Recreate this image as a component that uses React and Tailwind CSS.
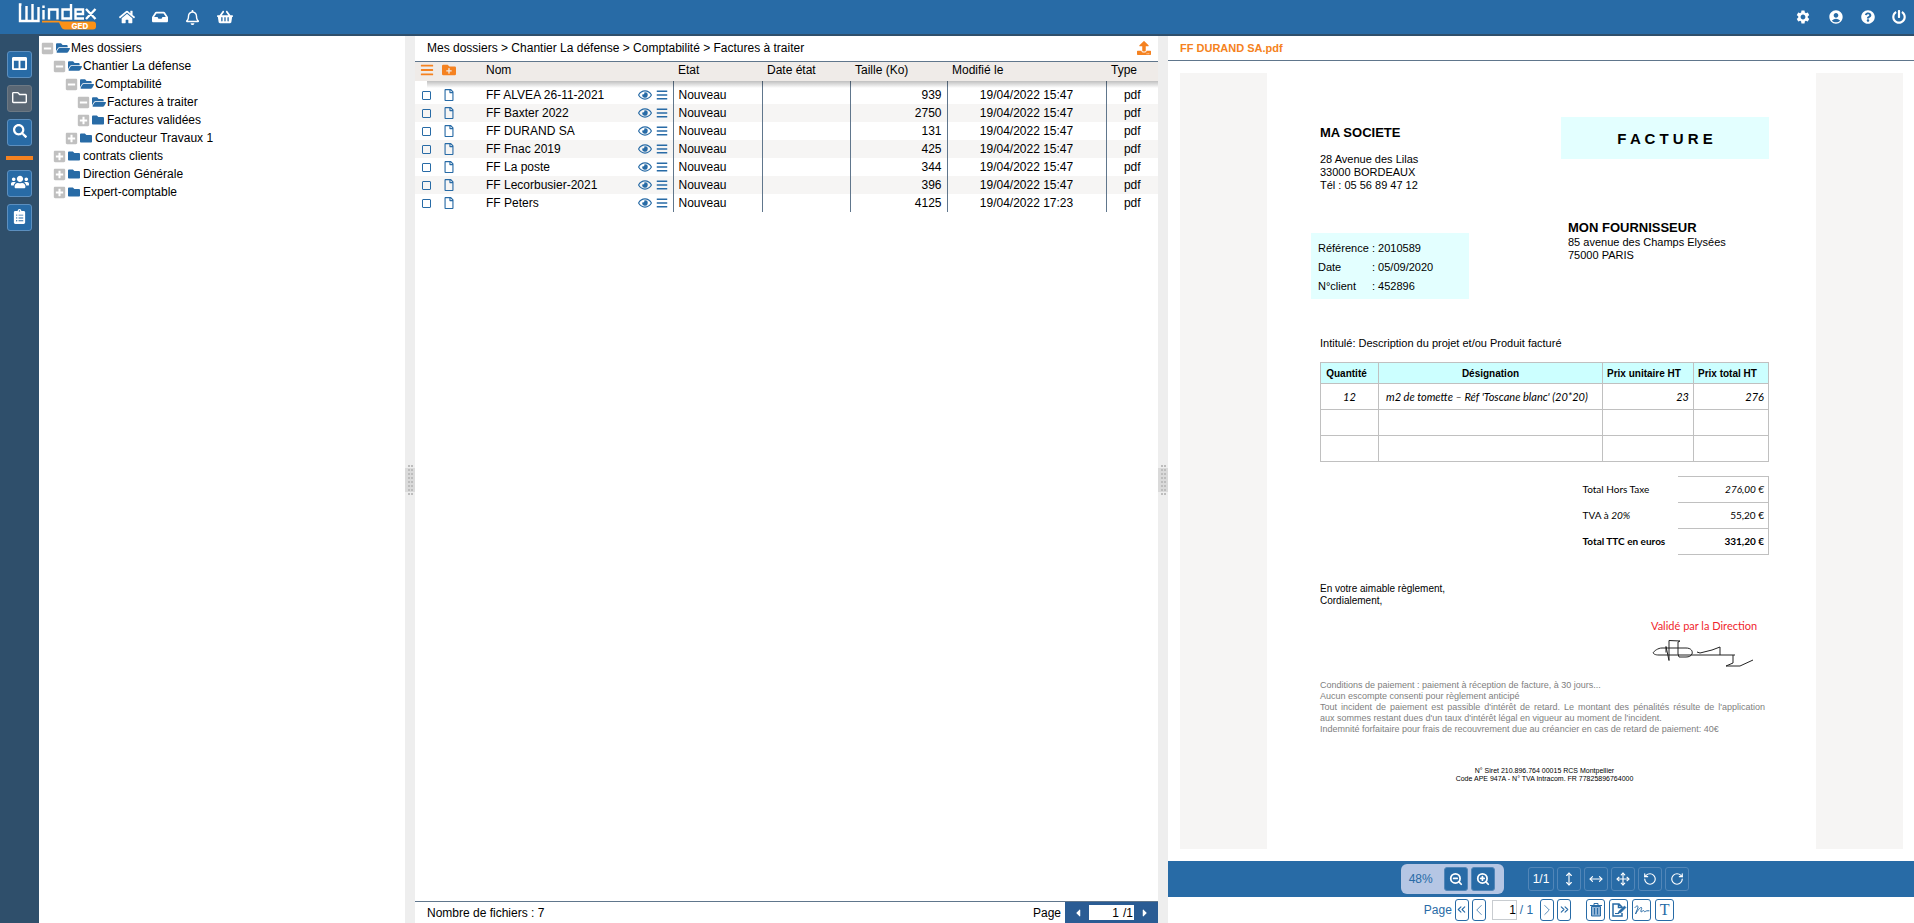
import { useState } from 'react'
import clsx from 'clsx'
import {
  FaHome, FaInbox, FaRegBell, FaShoppingBasket, FaQuestionCircle, FaPowerOff,
  FaColumns, FaRegFolder, FaSearch, FaUsers, FaClipboardList,
  FaMinusSquare, FaPlusSquare, FaFolderOpen, FaFolder, FaBars, FaFolderPlus,
  FaRegFile, FaRegEye, FaUpload, FaCaretLeft, FaCaretRight,
} from 'react-icons/fa'
import { MdSettings, MdAccountCircle } from 'react-icons/md'
import {
  ZoomIn, ZoomOut, MoveVertical, MoveHorizontal, Move, RotateCcw, RotateCw,
  ChevronLeft, ChevronRight, ChevronsLeft, ChevronsRight,
} from 'lucide-react'

const tree = [
  { depth: 0, open: true, label: 'Mes dossiers' },
  { depth: 1, open: true, label: 'Chantier La défense' },
  { depth: 2, open: true, label: 'Comptabilité' },
  { depth: 3, open: true, label: 'Factures à traiter' },
  { depth: 3, open: false, label: 'Factures validées' },
  { depth: 2, open: false, label: 'Conducteur Travaux 1' },
  { depth: 1, open: false, label: 'contrats clients' },
  { depth: 1, open: false, label: 'Direction Générale' },
  { depth: 1, open: false, label: 'Expert-comptable' },
]

const indents = ['pl-0', 'pl-3', 'pl-6', 'pl-9']

const files = [
  { name: 'FF ALVEA 26-11-2021', size: 939, date: '19/04/2022 15:47' },
  { name: 'FF Baxter 2022', size: 2750, date: '19/04/2022 15:47' },
  { name: 'FF DURAND SA', size: 131, date: '19/04/2022 15:47' },
  { name: 'FF Fnac 2019', size: 425, date: '19/04/2022 15:47' },
  { name: 'FF La poste', size: 344, date: '19/04/2022 15:47' },
  { name: 'FF Lecorbusier-2021', size: 396, date: '19/04/2022 15:47' },
  { name: 'FF Peters', size: 4125, date: '19/04/2022 17:23' },
]

function Logo() {
  return (
    <svg viewBox="0 0 80 28" className="w-20 h-7" fill="none" role="img" aria-label="Windex GED">
      <g stroke="#fff" strokeWidth="2.4">
        <path d="M4.500 1.500H3v16.500h18.500V4M9.500 3v15M15.500 1v17" />
        <path d="M26.500 7v9.500M26.500 2.500v2.500M32 16.500V6.500h8.500v10M54 1v14.500h-8.500V6.500H54M67 15.500h-8.500V6.500h7.500V11h-7.500M69 6l9.500 10M78.500 6L69 16" />
      </g>
      <path d="M25 17.800h16l4 .7h31q3 0 3 3v2q0 3-3 3H48q-3 0-4-3l-2-4H25z" fill="#fb9117" />
      <text x="54.500" y="25.500" fill="#fff" fontSize="8" fontWeight="800" fontFamily="Inter, sans-serif">GED</text>
    </svg>
  )
}

function TopBar() {
  return (
    <header className="flex items-center h-9 shrink-0 bg-[#286ba6] border-b-2 border-[#2f4f6b] text-white pl-[17px] pr-2">
      <Logo />
      <nav className="flex items-center gap-[17px] ml-[22px]">
        <button aria-label="Accueil"><FaHome size={16} /></button>
        <button aria-label="Boîte de réception"><FaInbox size={16} /></button>
        <button aria-label="Notifications"><FaRegBell size={15} /></button>
        <button aria-label="Panier"><FaShoppingBasket size={16} /></button>
      </nav>
      <div className="flex items-center gap-[17px] ml-auto">
        <button aria-label="Réglages"><MdSettings size={16} /></button>
        <button aria-label="Compte"><MdAccountCircle size={16} /></button>
        <button aria-label="Aide"><FaQuestionCircle size={14} /></button>
        <button aria-label="Déconnexion"><FaPowerOff size={14} /></button>
      </div>
    </header>
  )
}

function SideButton({ label, active, children }) {
  return (
    <button
      aria-label={label}
      className={clsx(
        'flex items-center justify-center w-[25px] h-[27px] pb-[3px] rounded-[3px] border text-white',
        active ? 'bg-[#5a6774] border-[#6d7984]' : 'bg-[#286ba6] border-[#5c8fbf]'
      )}
    >
      {children}
    </button>
  )
}

function Sidebar() {
  return (
    <aside className="flex flex-col items-center gap-[7px] w-[39px] shrink-0 bg-[#2f4f6b] pt-[15px]">
      <SideButton label="Tableau"><FaColumns size={15} /></SideButton>
      <SideButton label="Dossiers" active><FaRegFolder size={15} /></SideButton>
      <SideButton label="Recherche"><FaSearch size={14} /></SideButton>
      <hr className="w-[27px] h-1 my-[3px] border-0 bg-[#f58220]" />
      <SideButton label="Utilisateurs"><FaUsers size={18} /></SideButton>
      <SideButton label="Tâches"><FaClipboardList size={15} /></SideButton>
    </aside>
  )
}

function TreePanel() {
  return (
    <ul className="grow-[364] basis-0 min-w-0 pt-[3px] pl-[2px]">
      {tree.map(node => (
        <li key={node.label} className={clsx('flex items-center h-[18px]', indents[node.depth])}>
          <button aria-label={node.open ? 'Réduire' : 'Développer'} className="text-[#c0c0c0] mr-[2px]">
            {node.open ? <FaMinusSquare size={13} /> : <FaPlusSquare size={13} />}
          </button>
          <span className="flex w-[15px] shrink-0 text-[#286ba6]">
            {node.open ? <FaFolderOpen size={14} /> : <FaFolder size={12} />}
          </span>
          <span className="whitespace-nowrap">{node.label}</span>
        </li>
      ))}
    </ul>
  )
}

const gripDots = Array.from({ length: 16 }, (_, i) => i)

function Splitter() {
  return (
    <div className="flex items-center justify-center w-[10px] shrink-0 bg-[#eeeeee]">
      <div className="flex items-center w-full h-6 bg-[#dadada]">
        <div className="grid grid-cols-[2px_2px] gap-x-px gap-y-[2px] mx-auto">
          {gripDots.map(i => <span key={i} className="size-[2px] bg-[#bdbdbd]" />)}
        </div>
      </div>
    </div>
  )
}

function FileTable() {
  const [checked, setChecked] = useState({})
  const toggle = (name) => setChecked(c => ({ ...c, [name]: !c[name] }))

  return (
    <div className="relative">
      <table className="w-full table-fixed border-collapse">
        <colgroup>
          <col className="w-[23px]" />
          <col className="w-[48px]" />
          <col />
          <col className="w-[89px]" />
          <col className="w-[88px]" />
          <col className="w-[97px]" />
          <col className="w-[159px]" />
          <col className="w-[52px]" />
        </colgroup>
        <thead className="leading-4">
          <tr className="h-[19px] bg-[#efebe8] text-left align-top">
            <th className="p-0 pt-px pl-[5px] text-[#f58220]"><FaBars size={14} /></th>
            <th className="p-0 pt-px pl-1 text-[#f58220]"><FaFolderPlus size={14} /></th>
            <th className="p-0 font-normal">Nom</th>
            <th className="p-0 pl-[5px] font-normal">Etat</th>
            <th className="p-0 pl-[5px] font-normal">Date état</th>
            <th className="p-0 pl-[5px] font-normal">Taille (Ko)</th>
            <th className="p-0 pl-[5px] font-normal">Modifié le</th>
            <th className="p-0 pl-[5px] font-normal">Type</th>
          </tr>
        </thead>
        <tbody>
          <tr className="h-[5px]">
            <td colSpan={3} className="p-0 border-r border-[#60768c]" />
            <td className="p-0 border-r border-[#60768c]" />
            <td className="p-0 border-r border-[#60768c]" />
            <td className="p-0 border-r border-[#60768c]" />
            <td className="p-0 border-r border-[#60768c]" />
            <td className="p-0" />
          </tr>
          {files.map(file => (
            <tr key={file.name} className="h-[18px] even:bg-white odd:bg-[#f6f5f4]">
              <td className="p-0 pl-[7px]">
                <input
                  type="checkbox"
                  aria-label={file.name}
                  checked={!!checked[file.name]}
                  onChange={() => toggle(file.name)}
                  className="block appearance-none size-[9px] rounded-[1px] border border-[#286ba6] checked:bg-[#286ba6]"
                />
              </td>
              <td className="p-0 pl-[5px] text-[#286ba6]"><FaRegFile size={12} /></td>
              <td className="p-0 border-r border-[#60768c]">
                <div className="flex items-center gap-1 pr-[5px]">
                  <span className="mr-auto whitespace-nowrap">{file.name}</span>
                  <button aria-label="Voir" className="text-[#286ba6]"><FaRegEye size={14} /></button>
                  <button aria-label="Menu" className="text-[#286ba6]"><FaBars size={12} /></button>
                </div>
              </td>
              <td className="p-0 pl-[5px] border-r border-[#60768c]">Nouveau</td>
              <td className="p-0 border-r border-[#60768c]" />
              <td className="p-0 pr-[5px] border-r border-[#60768c] text-right">{file.size}</td>
              <td className="p-0 border-r border-[#60768c] text-center">{file.date}</td>
              <td className="p-0 text-center">pdf</td>
            </tr>
          ))}
        </tbody>
      </table>
      {/* shadow under the column titles */}
      <div className="absolute top-[19px] left-3 right-0 h-[7px] bg-linear-to-b from-black/25 to-transparent pointer-events-none" />
    </div>
  )
}

function FilePanel() {
  return (
    <section className="flex flex-col grow-[743] basis-0 min-w-0">
      <div className="flex items-center justify-between h-[26px] shrink-0 pl-3 pr-[7px] pb-[2px] border-b border-[#60768c]">
        <span>Mes dossiers &gt; Chantier La défense &gt; Comptabilité &gt; Factures à traiter</span>
        <button aria-label="Importer" className="text-[#f58220]"><FaUpload size={14} /></button>
      </div>
      <FileTable />
      <footer className="flex items-center h-[22px] shrink-0 mt-auto pl-3 border-t border-[#60768c]">
        <span>Nombre de fichiers : 7</span>
        <label htmlFor="list-page" className="ml-auto mr-1">Page</label>
        <div className="flex items-center justify-between w-[93px] h-full px-[7px] bg-[#2a5c94]">
          <button aria-label="Page précédente" className="text-white"><FaCaretLeft size={12} /></button>
          <div className="flex items-center w-[45px] h-[15px] bg-white">
            <input id="list-page" defaultValue="1" className="w-[30px] text-right outline-none" />
            <span className="pl-1">/1</span>
          </div>
          <button aria-label="Page suivante" className="text-white"><FaCaretRight size={12} /></button>
        </div>
      </footer>
    </section>
  )
}

function Invoice() {
  return (
    <article className="w-[549px] h-full shrink-0 overflow-hidden bg-white pl-[53px] pr-[47px] pt-11 text-[11px] leading-[13px] text-black">
      <div className="flex justify-between">
        <div>
          <h2 className="pt-2 text-[13px] leading-4 font-bold">MA SOCIETE</h2>
          <p className="mt-3">28 Avenue des Lilas<br />33000 BORDEAUX<br />Tél : 05 56 89 47 12</p>
        </div>
        <div className="flex items-center justify-center w-[208px] h-[42px] bg-[#e3ffff] text-[15px] font-bold">F A C T U R E</div>
      </div>

      <div className="flex justify-between mt-6">
        <dl className="grid grid-cols-[54px_1fr] w-[158px] h-[66px] mt-[17px] -ml-[9px] pl-[7px] pt-[6px] auto-rows-[19px] leading-[19px] bg-[#e3ffff]">
          <dt>Référence</dt><dd>: 2010589</dd>
          <dt>Date</dt><dd>: 05/09/2020</dd>
          <dt>N°client</dt><dd>: 452896</dd>
        </dl>
        <div className="w-[201px]">
          <h2 className="mt-1 text-[13px] leading-4 font-bold">MON FOURNISSEUR</h2>
          <p>85 avenue des Champs Elysées<br />75000 PARIS</p>
        </div>
      </div>

      <p className="mt-[38px]">Intitulé: Description du projet et/ou Produit facturé</p>

      <table className="w-full mt-3 table-fixed border-collapse">
        <colgroup>
          <col className="w-[58px]" />
          <col />
          <col className="w-[91px]" />
          <col className="w-[75px]" />
        </colgroup>
        <thead>
          <tr className="h-[21px] bg-[#ccffff] text-[10px]">
            <th className="p-0 pr-[6px] border border-[#c0c0c0]">Quantité</th>
            <th className="p-0 border border-[#c0c0c0]">Désignation</th>
            <th className="p-0 pl-1 text-left border border-[#c0c0c0]">Prix unitaire HT</th>
            <th className="p-0 pl-1 text-left border border-[#c0c0c0]">Prix total HT</th>
          </tr>
        </thead>
        <tbody className="font-['Lato',sans-serif] text-[11px] italic">
          <tr className="h-[26px]">
            <td className="p-0 text-center border border-[#c0c0c0]">12</td>
            <td className="p-0 pl-[7px] border border-[#c0c0c0] whitespace-nowrap">m2 de tomette – Réf 'Toscane blanc' (20*20)</td>
            <td className="p-0 pr-1 text-right border border-[#c0c0c0]">23</td>
            <td className="p-0 pr-1 text-right border border-[#c0c0c0]">276</td>
          </tr>
          {[1, 2].map(row => (
            <tr key={row} className="h-[26px]">
              <td className="border border-[#c0c0c0]" />
              <td className="border border-[#c0c0c0]" />
              <td className="border border-[#c0c0c0]" />
              <td className="border border-[#c0c0c0]" />
            </tr>
          ))}
        </tbody>
      </table>

      <table className="ml-auto mt-[14px] border-collapse font-['Lato',sans-serif] text-[10px]">
        <tbody>
          <tr className="h-[26px]">
            <th className="p-0 w-[95px] text-left font-normal">Total Hors Taxe</th>
            <td className="p-0 pr-1 w-[91px] text-right italic border-y border-r border-[#c0c0c0]">276,00 €</td>
          </tr>
          <tr className="h-[26px]">
            <th className="p-0 text-left font-normal">TVA à <i>20%</i></th>
            <td className="p-0 pr-1 text-right border-y border-r border-[#c0c0c0]">55,20 €</td>
          </tr>
          <tr className="h-[26px]">
            <th className="p-0 text-left font-bold">Total TTC en euros</th>
            <td className="p-0 pr-1 text-right font-bold border-y border-r border-[#c0c0c0]">331,20 €</td>
          </tr>
        </tbody>
      </table>

      <p className="mt-7 text-[10px] leading-3">En votre aimable règlement,<br />Cordialement,</p>

      <div className="w-[105px] ml-auto mr-[13px] mt-3">
        <p className="font-['Lato',sans-serif] text-[11px] text-[#f0262d] whitespace-nowrap">Validé par la Direction</p>
        <svg viewBox="0 0 105 30" className="block w-[105px] h-[30px] mt-[6px]" fill="none" stroke="#222" strokeWidth="1">
          <path d="M84 17H8c-4 0-5-1-6-2 1-2 5-5 9-5h24c5 0 7 3 6 6-1 2-3 3-6 3h-7l-1-3V4l2-1-11-.5v20l-3-14v6M46 14l3 1 12-3 8-3v8M82 17v8l-7 3h14l13-6" />
        </svg>
      </div>

      <div className="mt-3 pr-1 text-[9px] leading-[11px] text-[#808080]">
        <p>Conditions de paiement : paiement à réception de facture, à 30 jours...</p>
        <p>Aucun escompte consenti pour règlement anticipé</p>
        <p className="[text-align-last:justify]">Tout incident de paiement est passible d'intérêt de retard. Le montant des pénalités résulte de l'application</p>
        <p>aux sommes restant dues d'un taux d'intérêt légal en vigueur au moment de l'incident.</p>
        <p>Indemnité forfaitaire pour frais de recouvrement due au créancier en cas de retard de paiement: 40€</p>
      </div>

      <p className="mt-8 text-center text-[7px] leading-2">N° Siret 210.896.764 00015 RCS Montpellier<br />Code APE 947A - N° TVA Intracom. FR 77825896764000</p>
    </article>
  )
}

function ToolButton({ label, children }) {
  return (
    <button
      aria-label={label}
      className="flex items-center justify-center min-w-6 h-6 px-1 rounded-[3px] border border-[#5286b8] bg-[#286ba6] text-white text-xs"
    >
      {children}
    </button>
  )
}

function PageButton({ label, wide, children }) {
  return (
    <button
      aria-label={label}
      className={clsx(
        'flex items-center justify-center h-[22px] rounded-[3px] border border-[#286ba6] text-[#286ba6]',
        wide ? 'w-[19px]' : 'w-[14px]'
      )}
    >
      {children}
    </button>
  )
}

function TrashIcon() {
  return (
    <svg viewBox="0 0 14 16" className="w-[14px] h-4 shrink-0" fill="none" stroke="#286ba6">
      <path d="M2.500 4.500h9v9.500h-9z" fill="#8fb3d6" />
      <path d="M1 3.500h12M5 3V1.500h4V3M5.500 6v6.500M8.500 6v6.500" />
    </svg>
  )
}

function NoteIcon() {
  return (
    <svg viewBox="0 0 16 16" className="w-4 h-4 shrink-0" fill="none" stroke="#286ba6" strokeWidth="1.500">
      <path d="M11 11v3H2V2h6l3 3v1M7.500 2v3.500H11" />
      <path d="M7 11l1-2 5.500-5 1.500 1.500L9.500 11z" fill="#286ba6" strokeWidth=".5" />
      <path d="M4 11.500h4" strokeWidth="1" />
    </svg>
  )
}

function SignatureIcon() {
  return (
    <svg viewBox="0 0 16 16" className="w-4 h-4 shrink-0" fill="none" stroke="#286ba6" strokeLinecap="round">
      <path d="M1 5.500c1-1.500 2.500-2 3-1 .500 1.500-2 5-2.500 7.500C3.500 9 6 5 7.500 5.500 8.500 6 6 9.500 7 9.800c1 .2 1.800-1.300 2.500-1.300s.3 1.200 1.200 1.200 1.200-.9 2-.9H15" />
    </svg>
  )
}

function PreviewPanel() {
  return (
    <section className="flex flex-col grow-[746] basis-0 min-w-0">
      <h1 className="flex items-center h-[25px] shrink-0 pl-3 pb-px border-b border-[#60768c] text-[11px] font-bold text-[#f58220]">FF DURAND SA.pdf</h1>
      <div className="flex justify-center flex-1 min-h-0 ml-3 mr-[11px] my-3 bg-[#f6f5f4]">
        <Invoice />
      </div>
      <div className="flex items-center justify-center gap-6 h-9 shrink-0 pl-2 bg-[#286ba6]">
        <div className="flex items-center gap-[3px] h-[30px] pl-2 pr-[9px] rounded-md bg-[#b5c6e4]">
          <span className="w-8 text-xs text-[#286ba6]">48%</span>
          <ToolButton label="Zoom arrière"><ZoomOut size={14} strokeWidth={3} /></ToolButton>
          <ToolButton label="Zoom avant"><ZoomIn size={14} strokeWidth={3} /></ToolButton>
        </div>
        <div className="flex items-center gap-[3px]">
          <ToolButton label="Taille réelle">1/1</ToolButton>
          <ToolButton label="Hauteur"><MoveVertical size={14} /></ToolButton>
          <ToolButton label="Largeur"><MoveHorizontal size={14} /></ToolButton>
          <ToolButton label="Page entière"><Move size={14} /></ToolButton>
          <ToolButton label="Rotation à gauche"><RotateCcw size={14} /></ToolButton>
          <ToolButton label="Rotation à droite"><RotateCw size={14} /></ToolButton>
        </div>
      </div>
      <div className="flex items-center justify-center gap-[3px] h-[26px] shrink-0 pl-4 pb-px text-[#286ba6]">
        <label htmlFor="doc-page">Page</label>
        <PageButton label="Première page"><ChevronsLeft size={13} className="shrink-0" /></PageButton>
        <PageButton label="Page précédente"><ChevronLeft size={18} strokeWidth={1} className="shrink-0" /></PageButton>
        <input id="doc-page" defaultValue="1" className="w-[25px] h-5 ml-[3px] border border-[#c8ccd0] text-right text-black" />
        <span className="mr-1">/ 1</span>
        <PageButton label="Page suivante"><ChevronRight size={18} strokeWidth={1} className="shrink-0" /></PageButton>
        <PageButton label="Dernière page"><ChevronsRight size={13} className="shrink-0" /></PageButton>
        <div className="flex gap-1 ml-3">
          <PageButton label="Supprimer" wide><TrashIcon /></PageButton>
          <PageButton label="Annoter" wide><NoteIcon /></PageButton>
          <PageButton label="Signer" wide><SignatureIcon /></PageButton>
          <PageButton label="Texte" wide><span className="font-['Liberation_Serif',serif] text-base">T</span></PageButton>
        </div>
      </div>
    </section>
  )
}

export default function App() {
  return (
    <div className="flex flex-col h-screen overflow-hidden bg-white font-['Liberation_Sans',Arial,sans-serif] text-[12px] leading-[18px] text-black">
      <TopBar />
      <main className="flex flex-1 min-h-0">
        <Sidebar />
        <TreePanel />
        <Splitter />
        <FilePanel />
        <Splitter />
        <PreviewPanel />
      </main>
    </div>
  )
}
